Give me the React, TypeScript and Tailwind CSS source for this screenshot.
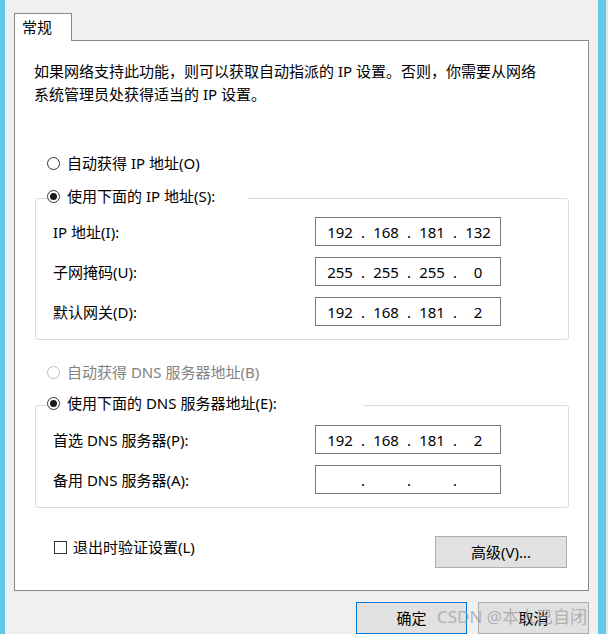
const font = "font-['Noto_Sans','Noto_Sans_CJK_SC',sans-serif]"

function Radio({ checked, disabled, label }: { checked?: boolean; disabled?: boolean; label: string }) {
  return (
    <div className={`flex items-center h-[20px] ${disabled ? "text-[#838383]" : "text-black"}`}>
      <span
        className={`w-[13px] h-[13px] rounded-full border bg-white flex items-center justify-center ${
          disabled ? "border-[#bcbcbc]" : "border-[#333333]"
        }`}
      >
        {checked && <span className="w-[7px] h-[7px] rounded-full bg-[#1a1a1a]" />}
      </span>
      <span className="ml-[7px] whitespace-nowrap">{label}</span>
    </div>
  )
}

function IpBox({ parts }: { parts: string[] }) {
  return (
    <div className="w-[186px] h-[29px] border border-[#7a7a7a] bg-white flex items-center pl-[7px]">
      {parts.map((p, i) => (
        <div key={i} className="flex items-center">
          <span className="w-[34px] text-center">{p}</span>
          {i < 3 && <span className="w-[12px] text-center">.</span>}
        </div>
      ))}
    </div>
  )
}

function Row({ label, parts }: { label: string; parts: string[] }) {
  return (
    <div className="flex items-center pl-[17px]">
      <span className="w-[262px] whitespace-nowrap">{label}</span>
      <IpBox parts={parts} />
    </div>
  )
}

function Group({ legend, legendWidth, children, pt }: { legend: string; legendWidth: string; children: React.ReactNode; pt: string }) {
  return (
    <fieldset className={`ml-[20px] w-[534px] border border-[#dcdcdc] rounded-[3px] pb-[13px] ${pt}`}>
      <legend className={`ml-[11px] h-[24px] pb-[4px] flex items-center ${legendWidth}`}>
        <Radio checked label={legend} />
      </legend>
      <div className="flex flex-col gap-[11px]">{children}</div>
    </fieldset>
  )
}

export default function App() {
  return (
    <div className={`relative w-[608px] h-[634px] overflow-hidden bg-[#f0f0f0] flex text-[15px] leading-[20px] text-black ${font}`}>
      <div className="w-[5px] bg-[#64c8e8]" />
      <div className="w-[593px] pl-[9px] pt-[13px]">
        <div className="w-[58px] h-[28px] -mb-px relative z-10 bg-white border border-b-0 border-[#898989] pl-[7px] pt-[3px]">
          常规
        </div>
        <div className="w-[575px] h-[551px] bg-white border border-[#898989] flex flex-col">
          <p className="pl-[19px] pt-[19px] leading-[23px]">
            如果网络支持此功能，则可以获取自动指派的 IP 设置。否则，你需要从网络
            <br />
            系统管理员处获得适当的 IP 设置。
          </p>
          <div className="pl-[32px] mt-[47px]">
            <Radio label="自动获得 IP 地址(O)" />
          </div>
          <div className="mt-[13px]">
            <Group legend="使用下面的 IP 地址(S):" legendWidth="w-[200px]" pt="pt-[7px]">
              <Row label="IP 地址(I):" parts={["192", "168", "181", "132"]} />
              <Row label="子网掩码(U):" parts={["255", "255", "255", "0"]} />
              <Row label="默认网关(D):" parts={["192", "168", "181", "2"]} />
            </Group>
          </div>
          <div className="pl-[32px] mt-[22px]">
            <Radio disabled label="自动获得 DNS 服务器地址(B)" />
          </div>
          <div className="mt-[11px]">
            <Group legend="使用下面的 DNS 服务器地址(E):" legendWidth="w-[316px]" pt="pt-[8px]">
              <Row label="首选 DNS 服务器(P):" parts={["192", "168", "181", "2"]} />
              <Row label="备用 DNS 服务器(A):" parts={["", "", "", ""]} />
            </Group>
          </div>
          <div className="flex items-start justify-between mt-[28px] pl-[39px] pr-[21px]">
            <div className="flex items-center h-[20px] mt-px">
              <span className="w-[13px] h-[13px] border border-[#333333] bg-white" />
              <span className="ml-[6px]">退出时验证设置(L)</span>
            </div>
            <button className="w-[132px] h-[32px] bg-[#e1e1e1] border border-[#adadad] flex items-center justify-center">
              高级(V)...
            </button>
          </div>
        </div>
        <div className="w-[575px] flex justify-end gap-[11px] mt-[11px]">
          <button className="w-[111px] h-[32px] bg-[#e1e1e1] border border-[#0078d7] flex items-center justify-center">
            确定
          </button>
          <button className="w-[111px] h-[32px] bg-[#e1e1e1] border border-[#adadad] flex items-center justify-center">
            取消
          </button>
        </div>
      </div>
      <div className="w-[8px] bg-[#64c8e8]" />
      <div className="w-[2px] bg-[#e6e6e6]" />
      <span className="absolute left-[437px] top-[606px] text-[17px] leading-[22px] text-[#9a9a9a]/70 whitespace-nowrap">
        CSDN @本人已自闭
      </span>
    </div>
  )
}
